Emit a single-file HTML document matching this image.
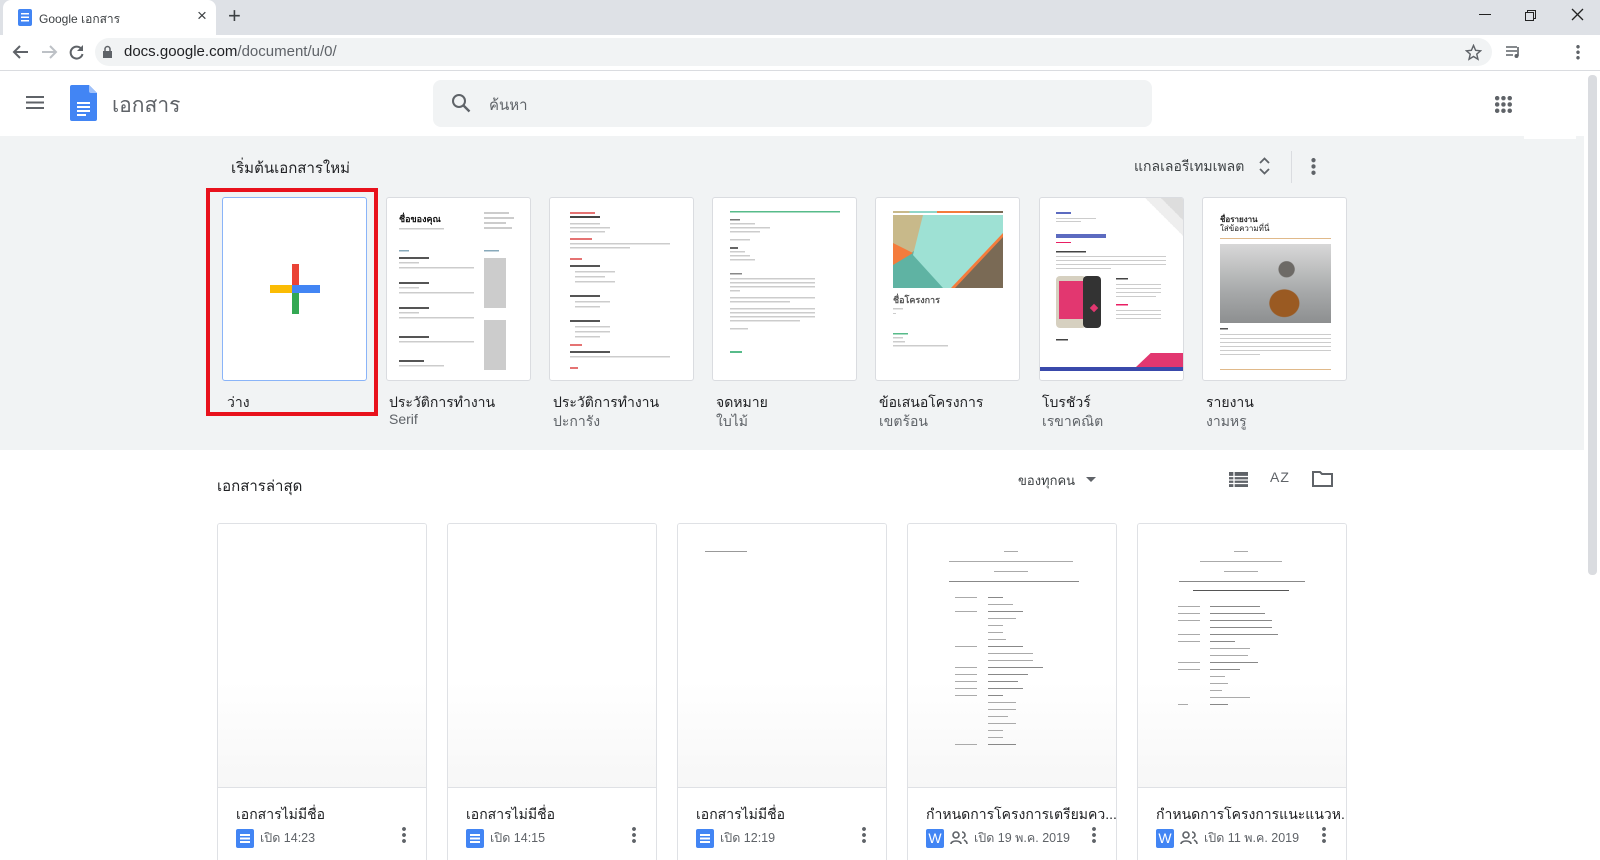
<!DOCTYPE html>
<html style="width:1600px;height:860px;overflow:hidden"><head><meta charset="utf-8"><style>
*{margin:0;padding:0;box-sizing:border-box}
body{width:1600px;height:860px;overflow:hidden;background:#fff;font-family:"Liberation Sans","Noto Sans CJK SC",sans-serif;position:relative;color:#202124}
.a{position:absolute}
.tcard{position:absolute;top:197px;width:145px;height:184px;background:#fff;border:1px solid #dadce0;border-radius:3px;overflow:hidden}
.lbl{position:absolute;top:392px;font-size:14px;color:#202124}
.sub{position:absolute;top:411px;font-size:14px;color:#5f6368}
.dcard{position:absolute;top:523px;width:210px;height:337px;border:1px solid #dfe1e5;border-bottom:none;border-radius:3px 3px 0 0;background:#fff;overflow:hidden}
.dthumb{position:absolute;left:0;top:0;width:208px;height:264px;background:linear-gradient(#fff 60%,#f7f7f7);border-bottom:1px solid #dfe1e5}
.dname{position:absolute;left:18px;top:280px;font-size:14px;color:#202124;white-space:nowrap}
.dmeta{position:absolute;left:18px;top:304px;font-size:12.5px;color:#5f6368;display:flex;align-items:center;gap:6px}
.di{width:18px;height:19px;background:#4285f4;border-radius:2px;position:relative}
.di::after{content:"";position:absolute;left:4px;top:5px;width:10px;height:9px;background:linear-gradient(#fff 0 2px,transparent 2px 3.5px,#fff 3.5px 5.5px,transparent 5.5px 7px,#fff 7px 9px)}
.wi{width:18px;height:19px;background:#4285f4;border-radius:2px;color:#fff;font-size:14px;text-align:center;line-height:19px}
.kb{position:absolute;right:20px;top:302px;width:4px;height:18px;background:radial-gradient(circle,#5f6368 1.8px,transparent 2px) 0 0/4px 6px}
.ln{position:absolute;height:1.5px;background:#bbb}
</style></head><body>
<div class="a" style="left:0;top:0;width:1600px;height:35px;background:#dee1e6"></div>
<div class="a" style="left:3px;top:0;width:213px;height:35px;background:#fff;border-radius:8px 8px 0 0"></div>
<div class="a" style="left:18px;top:9px;width:14px;height:17px;background:#4285f4;border-radius:2px"></div>
<div class="a" style="left:21px;top:13px;width:8px;height:9px;background:linear-gradient(#fff 0 1.5px,transparent 1.5px 3.5px,#fff 3.5px 5px,transparent 5px 7px,#fff 7px 8.5px,transparent 8.5px)"></div>
<div class="a" style="left:39px;top:10px;font-size:12px;color:#3c4043">Google เอกสาร</div>
<div class="a" style="left:197px;top:6px;font-size:17px;color:#3c4043">×</div>
<div class="a" style="left:228px;top:3px;font-size:22px;color:#3c4043">+</div>
<div class="a" style="left:1479px;top:14px;width:12px;height:1.3px;background:#222"></div>
<div class="a" style="left:1527px;top:10px;width:9px;height:9px;border:1.3px solid #222"></div>
<div class="a" style="left:1525px;top:12px;width:9px;height:9px;border:1.3px solid #222;background:#dee1e6"></div>
<svg class="a" style="left:1571px;top:8px" width="13" height="13"><path d="M1 1L12 12M12 1L1 12" stroke="#222" stroke-width="1.3"/></svg>
<svg class="a" style="left:12px;top:44px" width="18" height="16"><path d="M16 8H3M8 2L2 8l6 6" stroke="#5f6368" stroke-width="2" fill="none"/></svg>
<svg class="a" style="left:40px;top:44px" width="18" height="16"><path d="M2 8h13M10 2l6 6-6 6" stroke="#bdc1c6" stroke-width="2" fill="none"/></svg>
<svg class="a" style="left:68px;top:44px" width="17" height="17"><path d="M13.5 5A6 6 0 1 0 14.5 10" stroke="#5f6368" stroke-width="2" fill="none"/><path d="M15 1v6H9z" fill="#5f6368"/></svg>
<div class="a" style="left:95px;top:38px;width:1397px;height:28px;background:#f1f3f4;border-radius:14px"></div>
<svg class="a" style="left:102px;top:45px" width="11" height="14"><rect x="1" y="6" width="9" height="7" fill="#5f6368"/><path d="M3 6V4a2.5 2.5 0 0 1 5 0v2" stroke="#5f6368" stroke-width="1.5" fill="none"/></svg>
<div class="a" style="left:124px;top:43px;font-size:15px;color:#202124">docs.google.com<span style="color:#5f6368">/document/u/0/</span></div>
<svg class="a" style="left:1465px;top:44px" width="17" height="17" viewBox="0 0 24 24"><path d="M12 2l3 7 7 .6-5.4 4.7 1.7 7.2L12 17.6 5.7 21.5l1.7-7.2L2 9.6 9 9z" fill="none" stroke="#5f6368" stroke-width="2"/></svg>
<svg class="a" style="left:1505px;top:45px" width="16" height="14"><path d="M1 2h11M1 6h11M1 10h7" stroke="#5f6368" stroke-width="1.6"/><path d="M13 2v9" stroke="#5f6368" stroke-width="1.6"/><circle cx="11.5" cy="11" r="2" fill="#5f6368"/></svg>
<div class="a" style="left:1576px;top:44px;width:4px;height:16px;background:radial-gradient(circle,#5f6368 1.6px,transparent 1.9px) 0 0/4px 5.5px"></div>
<div class="a" style="left:0;top:70px;width:1600px;height:1px;background:#dadce0"></div>
<div class="a" style="left:26px;top:96px;width:18px;height:13px;background:linear-gradient(#5f6368 0 2px,transparent 2px 5.5px,#5f6368 5.5px 7.5px,transparent 7.5px 11px,#5f6368 11px 13px)"></div>
<svg class="a" style="left:70px;top:85px" width="27" height="36" viewBox="0 0 27 36"><path d="M2 0h17l8 8v26a2 2 0 0 1-2 2H2a2 2 0 0 1-2-2V2a2 2 0 0 1 2-2z" fill="#4285f4"/><path d="M19 0l8 8h-6a2 2 0 0 1-2-2z" fill="#a1c2fa"/><path d="M7 18h13M7 22h13M7 26h13M7 30h9" stroke="#fff" stroke-width="2"/></svg>
<div class="a" style="left:112px;top:89px;font-size:21px;color:#5f6368">เอกสาร</div>
<div class="a" style="left:433px;top:80px;width:719px;height:47px;background:#f1f3f4;border-radius:8px"></div>
<svg class="a" style="left:451px;top:93px" width="20" height="20"><circle cx="8" cy="8" r="6" stroke="#5f6368" stroke-width="2" fill="none"/><path d="M12.5 12.5l6 6" stroke="#5f6368" stroke-width="2.4"/></svg>
<div class="a" style="left:489px;top:93px;font-size:15px;color:#5f6368">ค้นหา</div>
<div class="a" style="left:1495px;top:96px;width:17px;height:17px;background:radial-gradient(circle,#5f6368 2.1px,transparent 2.4px) -1px -1px/6.3px 6.3px"></div>
<div class="a" style="left:0;top:136px;width:1584px;height:314px;background:#f1f3f4"></div>
<div class="a" style="left:1524px;top:71px;width:52px;height:68px;background:#fff"></div>
<div class="a" style="left:1588px;top:75px;width:9px;height:500px;background:#dadce0;border-radius:4px"></div>
<div class="a" style="left:231px;top:156px;font-size:15px;color:#202124">เริ่มต้นเอกสารใหม่</div>
<div class="a" style="left:1134px;top:156px;font-size:14px;color:#3c4043">แกลเลอรีเทมเพลต</div>
<svg class="a" style="left:1259px;top:157px" width="11" height="18"><path d="M1 6l4.5-4.5L10 6M1 12l4.5 4.5L10 12" stroke="#5f6368" stroke-width="1.8" fill="none"/></svg>
<div class="a" style="left:1291px;top:151px;width:1px;height:32px;background:#dadce0"></div>
<div class="a" style="left:1311px;top:157px;width:5px;height:18px;background:radial-gradient(circle,#5f6368 2px,transparent 2.3px) 0 0/5px 6.3px"></div>

<div class="a" style="left:206px;top:188px;width:172px;height:228px;border:4px solid #e8111c"></div>
<div class="tcard" style="left:222px;border-color:#8ab4f8">
 <svg class="a" style="left:47px;top:66px" width="50" height="50" viewBox="0 0 50 50"><rect x="22" y="0" width="7" height="22" fill="#ea4335"/><rect x="0" y="21" width="22" height="8" fill="#fbbc04"/><rect x="22" y="29" width="7" height="21" fill="#34a853"/><rect x="29" y="21" width="21" height="8" fill="#4285f4"/><rect x="22" y="21" width="7" height="8" fill="#4285f4"/></svg>
</div>
<div class="lbl" style="left:227px">ว่าง</div>

<div class="tcard" style="left:386px">
 <div class="a" style="left:12px;top:14px;font-size:9px;font-weight:bold;color:#111">ชื่อของคุณ</div>
 <svg class="a" style="left:12px;top:12px" width="125" height="160"><g fill="#ccc"><rect x="85" y="2" width="25" height="2"/><rect x="85" y="7" width="30" height="2"/><rect x="85" y="12" width="22" height="2"/><rect x="85" y="17" width="28" height="2"/><rect x="0" y="18" width="45" height="1.5"/>
 <rect x="0" y="40" width="10" height="1.5" fill="#8ab"/><rect x="85" y="40" width="15" height="1.5" fill="#8ab"/>
 <rect x="0" y="47" width="30" height="2" fill="#555"/><rect x="0" y="52" width="20" height="1.5"/><rect x="0" y="57" width="75" height="1.5"/>
 <rect x="0" y="72" width="30" height="2" fill="#555"/><rect x="0" y="77" width="20" height="1.5"/><rect x="0" y="82" width="75" height="1.5"/>
 <rect x="0" y="97" width="30" height="2" fill="#555"/><rect x="0" y="102" width="20" height="1.5"/><rect x="0" y="107" width="75" height="1.5"/>
 <rect x="0" y="126" width="30" height="2" fill="#555"/><rect x="0" y="131" width="75" height="1.5"/>
 <rect x="0" y="150" width="25" height="2" fill="#555"/><rect x="0" y="155" width="45" height="1.5"/>
 <rect x="85" y="48" width="22" height="50"/><rect x="85" y="110" width="22" height="60"/></g></svg>
</div>
<div class="lbl" style="left:389px">ประวัติการทำงาน</div><div class="sub" style="left:389px">Serif</div>

<div class="tcard" style="left:549px">
 <svg class="a" style="left:20px;top:14px" width="110" height="160"><g fill="#ccc"><rect x="0" y="0" width="25" height="2" fill="#e57373"/><rect x="0" y="4" width="30" height="2" fill="#444"/><rect x="0" y="11" width="30" height="1.5"/><rect x="0" y="15" width="40" height="1.5"/><rect x="0" y="19" width="35" height="1.5"/>
 <rect x="0" y="26" width="22" height="2" fill="#e57373"/><rect x="0" y="31" width="100" height="1.5"/><rect x="0" y="35" width="60" height="1.5"/>
 <rect x="0" y="46" width="12" height="2" fill="#e57373"/><rect x="0" y="53" width="30" height="2" fill="#555"/><rect x="5" y="59" width="40" height="1.5"/><rect x="5" y="64" width="30" height="1.5"/><rect x="5" y="69" width="40" height="1.5"/>
 <rect x="0" y="83" width="30" height="2" fill="#555"/><rect x="5" y="89" width="35" height="1.5"/><rect x="5" y="94" width="25" height="1.5"/>
 <rect x="0" y="108" width="30" height="2" fill="#555"/><rect x="5" y="114" width="35" height="1.5"/><rect x="5" y="119" width="35" height="1.5"/><rect x="5" y="124" width="25" height="1.5"/>
 <rect x="0" y="132" width="12" height="2" fill="#e57373"/><rect x="0" y="139" width="40" height="2" fill="#555"/><rect x="0" y="144" width="100" height="1.5"/><rect x="0" y="155" width="8" height="2" fill="#e57373"/></g></svg>
</div>
<div class="lbl" style="left:553px">ประวัติการทำงาน</div><div class="sub" style="left:553px">ปะการัง</div>

<div class="tcard" style="left:712px">
 <svg class="a" style="left:17px;top:13px" width="115" height="160"><g fill="#ccc"><rect x="0" y="0" width="110" height="1.5" fill="#57bb8a"/><rect x="0" y="8" width="10" height="1.5" fill="#777"/><rect x="0" y="12" width="25" height="1.5"/><rect x="0" y="16" width="40" height="1.5"/><rect x="0" y="20" width="30" height="1.5"/><rect x="0" y="28" width="20" height="1.5"/>
 <rect x="0" y="36" width="8" height="2" fill="#666"/><rect x="0" y="40" width="15" height="1.5"/><rect x="0" y="44" width="20" height="1.5"/><rect x="0" y="48" width="25" height="1.5"/>
 <rect x="0" y="62" width="12" height="1.5" fill="#888"/><rect x="0" y="67" width="85" height="1.5"/><rect x="0" y="71" width="85" height="1.5"/><rect x="0" y="75" width="85" height="1.5"/><rect x="0" y="79" width="10" height="1.5"/>
 <rect x="0" y="86" width="85" height="1.5"/><rect x="0" y="90" width="60" height="1.5"/><rect x="0" y="97" width="85" height="1.5"/><rect x="0" y="101" width="85" height="1.5"/><rect x="0" y="105" width="85" height="1.5"/><rect x="0" y="109" width="70" height="1.5"/><rect x="0" y="117" width="18" height="1.5"/><rect x="0" y="140" width="12" height="2" fill="#57bb8a"/></g></svg>
</div>
<div class="lbl" style="left:716px">จดหมาย</div><div class="sub" style="left:716px">ใบไม้</div>

<div class="tcard" style="left:875px">
 <div class="a" style="left:17px;top:13px;width:110px;height:2px;background:linear-gradient(90deg,#c8b98a 0 15%,#8fd6c8 15% 40%,#f47c3c 40% 70%,#7a6a55 70%)"></div>
 <svg class="a" style="left:17px;top:17px" width="110" height="73" viewBox="0 0 110 73"><rect width="110" height="73" fill="#5fb3a3"/><path d="M0 0h55l-10 20L0 50z" fill="#c8b98a"/><path d="M0 28l20 10L0 50z" fill="#f47c3c"/><path d="M30 0h80v40L60 73H50L20 40z" fill="#9ee1d4"/><path d="M110 20v53H60z" fill="#7a6a55"/><path d="M110 18v4L62 73h-4z" fill="#f47c3c"/></svg>
 <div class="a" style="left:17px;top:95px;font-size:9px;font-weight:bold;color:#555">ชื่อโครงการ</div>
 <svg class="a" style="left:17px;top:110px" width="110" height="60"><g fill="#ccc"><rect x="0" y="0" width="10" height="1.5"/><rect x="0" y="5" width="3" height="1"/><rect x="0" y="25" width="15" height="1.5" fill="#57bb8a"/><rect x="0" y="29" width="10" height="1.5"/><rect x="0" y="33" width="12" height="1.5"/><rect x="0" y="37" width="55" height="1.5"/></g></svg>
</div>
<div class="lbl" style="left:879px">ข้อเสนอโครงการ</div><div class="sub" style="left:879px">เขตร้อน</div>

<div class="tcard" style="left:1039px">
 <div class="a" style="left:105px;top:0;width:40px;height:40px;background:linear-gradient(225deg,#ddd 0 30%,#eee 30% 50%,#fff 50%)"></div>
 <svg class="a" style="left:16px;top:14px" width="110" height="140"><g fill="#ccc"><rect x="0" y="0" width="15" height="2" fill="#5c6bc0"/><rect x="0" y="6" width="40" height="1"/><rect x="0" y="9" width="25" height="1"/><rect x="0" y="22" width="50" height="4" fill="#5c6bc0"/><rect x="0" y="30" width="15" height="1" fill="#e91e63"/><rect x="0" y="39" width="30" height="1.5" fill="#444"/><rect x="0" y="44" width="110" height="1"/><rect x="0" y="48" width="110" height="1"/><rect x="0" y="52" width="110" height="1"/><rect x="0" y="56" width="55" height="1"/>
 <rect x="60" y="66" width="12" height="1.5" fill="#444"/><rect x="60" y="72" width="45" height="1"/><rect x="60" y="76" width="45" height="1"/><rect x="60" y="80" width="45" height="1"/><rect x="60" y="84" width="40" height="1"/><rect x="60" y="92" width="12" height="1.5" fill="#e91e63"/><rect x="60" y="98" width="45" height="1"/><rect x="60" y="102" width="45" height="1"/><rect x="60" y="106" width="45" height="1"/><rect x="0" y="127" width="12" height="1.5" fill="#444"/></g>
 <rect x="0" y="64" width="30" height="52" rx="4" fill="#d6d0c0"/><rect x="3" y="69" width="24" height="38" fill="#e23770"/><rect x="27" y="64" width="18" height="52" rx="4" fill="#333"/><rect x="35" y="93" width="6" height="6" transform="rotate(45 38 96)" fill="#e23770"/></svg>
 <div class="a" style="left:96px;top:155px;width:49px;height:14px;background:#e23770;clip-path:polygon(30% 0,100% 0,100% 100%,0 100%)"></div>
 <div class="a" style="left:0;top:169px;width:145px;height:4px;background:#3949ab"></div>
</div>
<div class="lbl" style="left:1042px">โบรชัวร์</div><div class="sub" style="left:1042px">เรขาคณิต</div>

<div class="tcard" style="left:1202px">
 <div class="a" style="left:17px;top:17px;font-size:8px;font-weight:bold;color:#222;line-height:9px">ชื่อรายงาน<br><span style="font-weight:normal">ใส่ข้อความที่นี่</span></div>
 <div class="a" style="left:17px;top:40px;width:111px;height:1px;background:#e0b98a"></div>
 <div class="a" style="left:17px;top:46px;width:111px;height:79px;background:radial-gradient(ellipse at 58% 75%,#9a5a22 0 16%,transparent 17%),radial-gradient(circle at 60% 32%,#6d6a66 0 9%,transparent 10%),linear-gradient(#d8d8d8,#a7a9aa 60%,#8d8f90)"></div>
 <svg class="a" style="left:17px;top:130px" width="111" height="45"><g fill="#ccc"><rect x="0" y="0" width="8" height="1.5" fill="#555"/><rect x="0" y="6" width="111" height="1"/><rect x="0" y="10" width="111" height="1"/><rect x="0" y="14" width="111" height="1"/><rect x="0" y="18" width="111" height="1"/><rect x="0" y="22" width="111" height="1"/><rect x="0" y="26" width="40" height="1"/><rect x="0" y="41" width="111" height="1" fill="#e0b98a"/></g></svg>
</div>
<div class="lbl" style="left:1206px">รายงาน</div><div class="sub" style="left:1206px">งามหรู</div>

<div class="a" style="left:217px;top:474px;font-size:15px;color:#202124">เอกสารล่าสุด</div>
<div class="a" style="left:1018px;top:470px;font-size:13px;color:#3c4043">ของทุกคน</div>
<svg class="a" style="left:1086px;top:477px" width="10" height="6"><path d="M0 0h10L5 5z" fill="#5f6368"/></svg>
<svg class="a" style="left:1229px;top:472px" width="19" height="15"><rect x="0" y="0" width="19" height="15" fill="#5f6368"/><path d="M0 4.5h19M0 8h19M0 11.5h19M5 0v15" stroke="#fff" stroke-width="1.3"/></svg>
<div class="a" style="left:1270px;top:469px;font-size:14px;color:#5f6368;letter-spacing:1px">AZ</div>
<svg class="a" style="left:1312px;top:470px" width="21" height="17"><path d="M1 2h7l2 2h10v12H1z" fill="none" stroke="#5f6368" stroke-width="2"/></svg>

<div class="dcard" style="left:217px"><div class="dthumb"></div><div class="dname">เอกสารไม่มีชื่อ</div><div class="dmeta"><div class="di"></div>เปิด 14:23</div><div class="kb"></div></div>
<div class="dcard" style="left:447px"><div class="dthumb"></div><div class="dname">เอกสารไม่มีชื่อ</div><div class="dmeta"><div class="di"></div>เปิด 14:15</div><div class="kb"></div></div>
<div class="dcard" style="left:677px"><div class="dthumb"><div class="ln" style="left:27px;top:27px;width:42px;height:1px;background:#999"></div></div><div class="dname">เอกสารไม่มีชื่อ</div><div class="dmeta"><div class="di"></div>เปิด 12:19</div><div class="kb"></div></div>
<div class="dcard" style="left:907px"><div class="dthumb">
 <svg class="a" style="left:0;top:0" width="208" height="240"><g fill="#aaa"><rect x="96" y="27" width="14" height="1"/><rect x="41" y="37" width="124" height="1"/><rect x="86" y="47" width="34" height="1"/><rect x="41" y="57" width="130" height="1" fill="#888"/>
 <rect x="47" y="73" width="22" height="1"/><rect x="80" y="73" width="15" height="1" fill="#888"/>
 <rect x="80" y="80" width="25" height="1"/><rect x="47" y="87" width="22" height="1"/><rect x="80" y="87" width="35" height="1" fill="#888"/><rect x="80" y="94" width="28" height="1"/><rect x="80" y="101" width="15" height="1"/><rect x="80" y="108" width="15" height="1"/><rect x="80" y="115" width="18" height="1"/><rect x="47" y="122" width="22" height="1"/><rect x="80" y="122" width="35" height="1" fill="#888"/><rect x="80" y="129" width="45" height="1"/><rect x="80" y="136" width="45" height="1"/><rect x="47" y="143" width="22" height="1"/><rect x="80" y="143" width="55" height="1" fill="#888"/><rect x="47" y="150" width="22" height="1"/><rect x="80" y="150" width="40" height="1" fill="#888"/><rect x="47" y="157" width="22" height="1"/><rect x="80" y="157" width="30" height="1" fill="#888"/><rect x="47" y="164" width="22" height="1"/><rect x="80" y="164" width="35" height="1" fill="#888"/><rect x="47" y="171" width="22" height="1"/><rect x="80" y="171" width="15" height="1" fill="#888"/><rect x="80" y="178" width="28" height="1"/><rect x="80" y="185" width="28" height="1"/><rect x="80" y="192" width="20" height="1"/><rect x="80" y="199" width="28" height="1"/><rect x="80" y="206" width="15" height="1"/><rect x="80" y="213" width="15" height="1"/><rect x="47" y="220" width="22" height="1"/><rect x="80" y="220" width="28" height="1" fill="#888"/></g></svg>
</div><div class="dname">กำหนดการโครงการเตรียมคว...</div><div class="dmeta"><div class="wi">W</div><svg width="18" height="14"><circle cx="6" cy="4" r="3" fill="none" stroke="#5f6368" stroke-width="1.6"/><path d="M1 13c0-4 10-4 10 0" fill="none" stroke="#5f6368" stroke-width="1.6"/><path d="M12 1a3 3 0 0 1 0 6M14 9c2 1 3 2 3 4" fill="none" stroke="#5f6368" stroke-width="1.6"/></svg>เปิด 19 พ.ค. 2019</div><div class="kb"></div></div>
<div class="dcard" style="left:1137px"><div class="dthumb">
 <svg class="a" style="left:0;top:0" width="208" height="240"><g fill="#aaa"><rect x="96" y="27" width="14" height="1"/><rect x="62" y="37" width="82" height="1"/><rect x="86" y="47" width="34" height="1"/><rect x="41" y="57" width="126" height="1" fill="#888"/><rect x="55" y="66" width="96" height="1" fill="#555"/>
 <rect x="40" y="82" width="22" height="1"/><rect x="72" y="82" width="50" height="1" fill="#888"/><rect x="40" y="89" width="22" height="1"/><rect x="72" y="89" width="55" height="1" fill="#888"/><rect x="40" y="96" width="22" height="1"/><rect x="72" y="96" width="62" height="1" fill="#888"/><rect x="72" y="103" width="62" height="1" fill="#888"/><rect x="40" y="110" width="22" height="1"/><rect x="72" y="110" width="68" height="1" fill="#888"/><rect x="40" y="117" width="22" height="1"/><rect x="72" y="117" width="25" height="1" fill="#888"/><rect x="72" y="124" width="40" height="1"/><rect x="72" y="131" width="38" height="1"/><rect x="40" y="138" width="22" height="1"/><rect x="72" y="138" width="48" height="1" fill="#888"/><rect x="40" y="145" width="22" height="1"/><rect x="72" y="145" width="30" height="1" fill="#888"/><rect x="72" y="152" width="15" height="1"/><rect x="72" y="159" width="18" height="1"/><rect x="72" y="166" width="12" height="1"/><rect x="72" y="173" width="40" height="1"/><rect x="40" y="180" width="10" height="1"/><rect x="72" y="180" width="18" height="1" fill="#888"/></g></svg>
</div><div class="dname">กำหนดการโครงการแนะแนวห...</div><div class="dmeta"><div class="wi">W</div><svg width="18" height="14"><circle cx="6" cy="4" r="3" fill="none" stroke="#5f6368" stroke-width="1.6"/><path d="M1 13c0-4 10-4 10 0" fill="none" stroke="#5f6368" stroke-width="1.6"/><path d="M12 1a3 3 0 0 1 0 6M14 9c2 1 3 2 3 4" fill="none" stroke="#5f6368" stroke-width="1.6"/></svg>เปิด 11 พ.ค. 2019</div><div class="kb"></div></div>
</body></html>
